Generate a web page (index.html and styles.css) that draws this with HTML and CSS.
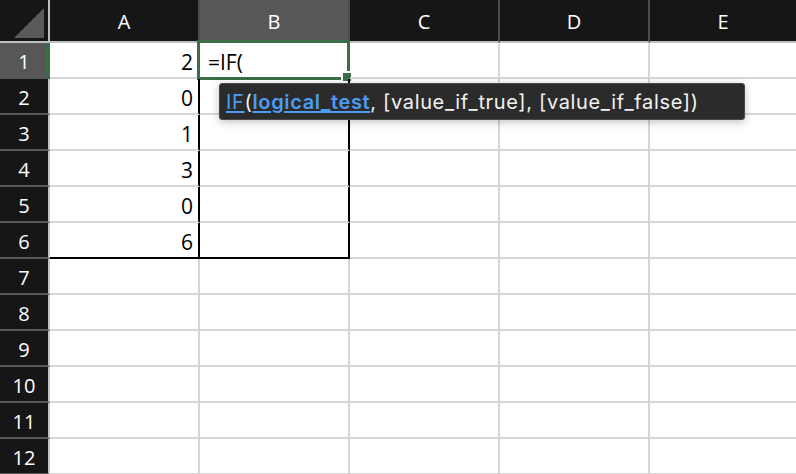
FILE: index.html
```html
<!DOCTYPE html>
<html>
<head>
<meta charset="utf-8">
<link rel="stylesheet" href="styles.css">
</head>
<body>
<div class="sheet">
  <div class="grid">
    <div class="corner"><div class="tri"></div></div>
    <div class="ch">A</div>
    <div class="ch sel">B</div>
    <div class="ch">C</div>
    <div class="ch">D</div>
    <div class="ch last">E</div>

    <div class="rh sel">1</div>
    <div class="c num">2</div>
    <div class="c b1">=IF(
      <div class="selbox"><div class="handle"></div></div>
    </div>
    <div class="c"></div><div class="c"></div><div class="c last"></div>

    <div class="rh">2</div>
    <div class="c num br">0</div><div class="c br"></div><div class="c"></div><div class="c"></div><div class="c last"></div>
    <div class="rh">3</div>
    <div class="c num br">1</div><div class="c br"></div><div class="c"></div><div class="c"></div><div class="c last"></div>
    <div class="rh">4</div>
    <div class="c num br">3</div><div class="c br"></div><div class="c"></div><div class="c"></div><div class="c last"></div>
    <div class="rh">5</div>
    <div class="c num br">0</div><div class="c br"></div><div class="c"></div><div class="c"></div><div class="c last"></div>
    <div class="rh">6</div>
    <div class="c num br bb">6</div><div class="c br bb"></div><div class="c"></div><div class="c"></div><div class="c last"></div>
    <div class="rh">7</div>
    <div class="c"></div><div class="c"></div><div class="c"></div><div class="c"></div><div class="c last"></div>
    <div class="rh">8</div>
    <div class="c"></div><div class="c"></div><div class="c"></div><div class="c"></div><div class="c last"></div>
    <div class="rh">9</div>
    <div class="c"></div><div class="c"></div><div class="c"></div><div class="c"></div><div class="c last"></div>
    <div class="rh">10</div>
    <div class="c"></div><div class="c"></div><div class="c"></div><div class="c"></div><div class="c last"></div>
    <div class="rh">11</div>
    <div class="c"></div><div class="c"></div><div class="c"></div><div class="c"></div><div class="c last"></div>
    <div class="rh">12</div>
    <div class="c"></div><div class="c"></div><div class="c"></div><div class="c"></div><div class="c last"></div>
  </div>
  <div class="tip"><span class="fn">IF</span>(<span class="arg">logical_test</span>, [value_if_true], [value_if_false])</div>
</div>
</body>
</html>
```
FILE: styles.css
```css
* { box-sizing: border-box; }
html, body { margin: 0; padding: 0; background: #ffffff; }
.sheet {
  position: relative;
  width: 796px;
  height: 474px;
  overflow: hidden;
  font-family: "Open Sans", "Liberation Sans", sans-serif;
}
.grid {
  display: grid;
  grid-template-columns: 50px 150px 150px 150px 150px 146px;
  grid-template-rows: 43px repeat(12, 36px);
}
.corner {
  background: #161616;
  border-right: 2px solid #bfbfbf;
  border-bottom: 2px solid #bfbfbf;
  position: relative;
}
.tri {
  position: absolute;
  left: 14px;
  top: 8px;
  width: 30px;
  height: 30px;
  background: #5a5a5a;
  clip-path: polygon(100% 0, 100% 100%, 0 100%);
}
.ch {
  background: #161616;
  color: #ffffff;
  border-right: 2px solid #4c4c4c;
  border-bottom: 2px solid #bfbfbf;
  display: flex;
  align-items: center;
  justify-content: center;
  font-size: 20px;
  padding-top: 1px;
}
.ch.sel { background: #575757; }
.ch.last { border-right: none; }
.rh {
  background: #161616;
  color: #ffffff;
  border-right: 2px solid #c4c4c4;
  border-bottom: 2px solid #555555;
  display: flex;
  align-items: center;
  justify-content: center;
  font-size: 20px;
  padding-top: 2px;
}
.rh.sel {
  background: #575757;
  border-right-color: #3b6e48;
  box-shadow: inset -2px 0 0 #3b6e48;
}
.c {
  border-right: 2px solid #d6d6d6;
  border-bottom: 2px solid #d6d6d6;
  display: flex;
  align-items: flex-end;
  font-size: 21px;
  color: #000000;
  padding: 0 5px 1px 7px;
  position: relative;
}
.c.last { border-right: none; }
.num { justify-content: flex-end; }
.br { border-right-color: #000000; }
.bb { border-bottom-color: #000000; }
.b1 { padding-left: 8px; }
.selbox {
  position: absolute;
  left: -3px;
  top: -3px;
  width: 153px;
  height: 40px;
  border: 3px solid #3b6e48;
}
.handle {
  position: absolute;
  right: -4px;
  bottom: -4px;
  width: 8px;
  height: 8px;
  background: #3b6e48;
  box-shadow: -1px -1px 0 1px #ffffff;
}
.tip {
  position: absolute;
  left: 219px;
  top: 83px;
  width: 526px;
  height: 37px;
  background: #2b2b2b;
  border: 1px solid #4a4a4a;
  border-radius: 3px;
  box-shadow: 0 2px 8px rgba(0, 0, 0, 0.25);
  color: #f2f2f2;
  font-family: Inter, "Liberation Sans", Arial, sans-serif;
  font-size: 20px;
  letter-spacing: 0.65px;
  display: flex;
  align-items: center;
  padding-left: 6px;
  white-space: nowrap;
}
.fn { color: #4d9cf4; text-decoration: underline; text-underline-offset: 2px; }
.arg { color: #4d9cf4; text-decoration: underline; text-underline-offset: 2px; font-weight: 600; }
```
